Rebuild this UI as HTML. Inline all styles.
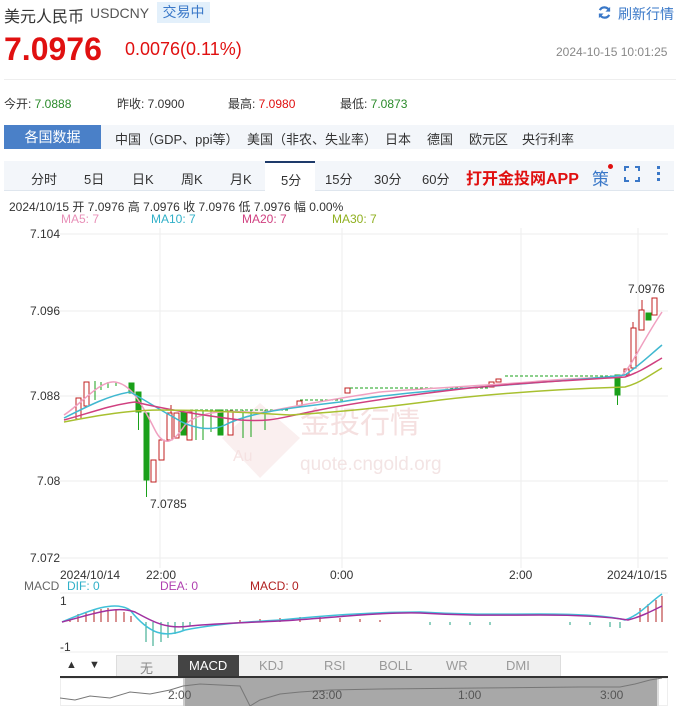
<!DOCTYPE html>
<html><head><meta charset="utf-8"><style>
*{margin:0;padding:0;box-sizing:border-box}
body{width:682px;height:708px;background:#fff;font-family:"Liberation Sans","Noto Sans CJK SC",sans-serif;position:relative;overflow:hidden;color:#333}
.a{position:absolute;white-space:nowrap}
</style></head><body>
<div class="a" style="left:4px;top:3px;font-size:16px;color:#333">美元人民币</div>
<div class="a" style="left:90px;top:5px;font-size:14px;color:#555">USDCNY</div>
<div class="a" style="left:157px;top:2px;width:53px;height:21px;background:#e3f0fb;color:#3a78c8;font-size:14px;text-align:center;line-height:21px">交易中</div>
<svg class="a" style="left:597px;top:5px" width="15" height="15" viewBox="0 0 16 16"><path d="M13 6A5.5 5.5 0 0 0 3 5.5M3 10a5.5 5.5 0 0 0 10 .5" fill="none" stroke="#3a78c8" stroke-width="2.4"/><path d="M14 2v5h-5z M2 14v-5h5z" fill="#3a78c8"/></svg>
<div class="a" style="left:618px;top:4px;font-size:14px;color:#3a78c8">刷新行情</div>
<div class="a" style="left:4px;top:31px;font-size:32px;font-weight:bold;color:#e01010">7.0976</div>
<div class="a" style="left:125px;top:39px;font-size:18px;color:#e01010">0.0076(0.11%)</div>
<div class="a" style="left:556px;top:45px;font-size:12px;color:#888">2024-10-15 10:01:25</div>
<div class="a" style="left:4px;top:79px;width:672px;height:1px;background:#eee"></div>
<div class="a" style="left:4px;top:95px;font-size:12px">今开: <span style="color:#2a8a2a">7.0888</span></div>
<div class="a" style="left:117px;top:95px;font-size:12px">昨收: 7.0900</div>
<div class="a" style="left:228px;top:95px;font-size:12px">最高: <span style="color:#e01010">7.0980</span></div>
<div class="a" style="left:340px;top:95px;font-size:12px">最低: <span style="color:#2a8a2a">7.0873</span></div>
<div class="a" style="left:4px;top:125px;width:670px;height:24px;background:#f3f6fa"></div>
<div class="a" style="left:4px;top:125px;width:97px;height:24px;background:#4a80c8;color:#fff;font-size:14px;text-align:center;line-height:24px">各国数据</div>
<div class="a" style="left:115px;top:129px;font-size:13px">中国（GDP、ppi等）</div>
<div class="a" style="left:247px;top:129px;font-size:13px">美国（非农、失业率）</div>
<div class="a" style="left:385px;top:129px;font-size:13px">日本</div>
<div class="a" style="left:427px;top:129px;font-size:13px">德国</div>
<div class="a" style="left:469px;top:129px;font-size:13px">欧元区</div>
<div class="a" style="left:522px;top:129px;font-size:13px">央行利率</div>
<div class="a" style="left:4px;top:161px;width:670px;height:30px;background:#f3f6fa;border-bottom:1px solid #dfe6ee"></div>
<div class="a" style="left:265px;top:161px;width:50px;height:31px;background:#fff;border-top:2px solid #1e3a6a"></div>
<div class="a" style="top:169px;font-size:13px;left:31px">分时</div>
<div class="a" style="top:169px;font-size:13px;left:84px">5日</div>
<div class="a" style="top:169px;font-size:13px;left:132px">日K</div>
<div class="a" style="top:169px;font-size:13px;left:181px">周K</div>
<div class="a" style="top:169px;font-size:13px;left:230px">月K</div>
<div class="a" style="top:170px;font-size:13px;left:281px">5分</div>
<div class="a" style="top:169px;font-size:13px;left:325px">15分</div>
<div class="a" style="top:169px;font-size:13px;left:374px">30分</div>
<div class="a" style="top:169px;font-size:13px;left:422px">60分</div>
<div class="a" style="top:165px;font-size:16px;left:466px;color:#e01010;font-weight:bold">打开金投网APP</div>
<div class="a" style="top:165px;font-size:17px;left:592px;color:#3a78c8">策</div>
<div class="a" style="top:164px;left:608px;width:5px;height:5px;border-radius:50%;background:#e01010"></div>
<svg class="a" style="left:624px;top:166px" width="16" height="16"><path d="M1 5V1h4M11 1h4v4M15 11v4h-4M5 15H1v-4" fill="none" stroke="#3a78c8" stroke-width="2"/></svg>
<div class="a" style="left:657px;top:166px;width:3px;height:3px;background:#3a78c8;box-shadow:0 6px #3a78c8,0 12px #3a78c8"></div>
<div class="a" style="left:9px;top:198px;font-size:12px">2024/10/15 开 7.0976 高 7.0976 收 7.0976 低 7.0976 幅 0.00%</div>
<div class="a" style="left:61px;top:212px;font-size:12px;color:#e890b8">MA5: 7</div>
<div class="a" style="left:151px;top:212px;font-size:12px;color:#30b0c8">MA10: 7</div>
<div class="a" style="left:242px;top:212px;font-size:12px;color:#d04080">MA20: 7</div>
<div class="a" style="left:332px;top:212px;font-size:12px;color:#90b020">MA30: 7</div>
<div class="a" style="left:30px;top:227px;font-size:12px">7.104</div>
<div class="a" style="left:30px;top:304px;font-size:12px">7.096</div>
<div class="a" style="left:30px;top:389px;font-size:12px">7.088</div>
<div class="a" style="left:37px;top:474px;font-size:12px">7.08</div>
<div class="a" style="left:30px;top:551px;font-size:12px">7.072</div>
<svg class="a" style="left:0;top:228px" width="682" height="480">
<g stroke="#eee" stroke-width="1">
<line x1="60" y1="6" x2="668" y2="6"/><line x1="60" y1="83" x2="668" y2="83"/><line x1="60" y1="168" x2="668" y2="168"/><line x1="60" y1="253" x2="668" y2="253"/><line x1="60" y1="330" x2="668" y2="330"/>
<line x1="160" y1="0" x2="160" y2="340"/><line x1="342" y1="0" x2="342" y2="340"/><line x1="521" y1="0" x2="521" y2="340"/><line x1="638" y1="0" x2="638" y2="340"/>
</g>
<g opacity="0.08"><path d="M222 210L260 175L300 210L260 250Z" fill="#c03030"/></g>
<text x="300" y="205" font-size="30" fill="#f5e0e0" font-family="Noto Sans CJK SC">金投行情</text>
<text x="300" y="242" font-size="19" fill="#f3e4e4">quote.cngold.org</text>
<text x="233" y="233" font-size="16" fill="#f5e2e2">Au</text>
</svg>
<svg class="a" style="left:0;top:0" width="682" height="708">
<g fill="#fff" stroke="#c02020" stroke-width="1">
<rect x="76" y="398" width="5" height="21"/><rect x="84" y="382" width="5" height="24"/>
<rect x="151" y="460" width="5" height="22"/><rect x="159" y="440" width="5" height="20"/><rect x="167" y="413" width="5" height="27"/><rect x="174" y="413" width="5" height="25"/><rect x="187" y="412" width="5" height="28"/><rect x="228" y="411" width="5" height="24"/>
<rect x="297" y="401" width="5" height="5"/><rect x="345" y="388" width="5" height="5"/><rect x="489" y="382" width="5" height="5"/><rect x="496" y="379" width="5" height="3"/>
<rect x="624" y="369" width="5" height="6"/><rect x="631" y="328" width="5" height="40"/><rect x="639" y="310" width="5" height="20"/><rect x="652" y="298" width="5" height="17"/>
</g>
<g stroke="#c02020"><line x1="642" y1="300" x2="642" y2="310"/><line x1="633" y1="322" x2="633" y2="328"/><line x1="171" y1="405" x2="171" y2="413"/></g>
<g fill="#1aa01a" stroke="#1aa01a">
<rect x="129" y="383" width="5" height="10"/><rect x="136" y="392" width="5" height="20"/><line x1="138.5" y1="412" x2="138.5" y2="430"/>
<rect x="144" y="413" width="5" height="67"/><line x1="146.5" y1="480" x2="146.5" y2="497"/>
<rect x="181" y="412" width="5" height="23"/><rect x="218" y="410" width="5" height="25"/>
<rect x="615" y="375" width="5" height="20"/><line x1="617.5" y1="395" x2="617.5" y2="405"/><rect x="646" y="313" width="5" height="7"/>
<line x1="95" y1="381" x2="95" y2="400"/><line x1="101" y1="382" x2="101" y2="390"/><line x1="108" y1="382" x2="108" y2="388"/><line x1="116" y1="382" x2="116" y2="386"/>
<line x1="196" y1="410" x2="196" y2="440"/><line x1="203" y1="410" x2="203" y2="440"/><line x1="211" y1="410" x2="211" y2="432"/><line x1="243" y1="410" x2="243" y2="438"/><line x1="251" y1="410" x2="251" y2="437"/><line x1="265" y1="410" x2="265" y2="430"/>
</g>
<g stroke="#1aa01a" stroke-dasharray="3,2" fill="none"><path d="M190 410H290M300 400H345M350 388H490M505 376H620"/></g>
<g fill="none" stroke-width="1.5">
<path d="M64 415C80 405 100 380 115 382C130 384 140 400 155 430C165 450 175 440 185 425C200 410 230 410 260 413C300 405 340 398 380 392C430 388 480 386 530 382C570 378 600 378 620 377C630 370 640 345 662 312" stroke="#f0a0c0"/>
<path d="M64 418C90 405 110 395 130 392C145 400 160 410 175 418C190 428 210 432 225 425C250 412 290 408 340 402C400 392 470 388 520 384C570 380 600 378 625 375C640 365 650 355 662 345" stroke="#40b8d0"/>
<path d="M64 420C90 413 110 405 135 402C160 408 200 415 240 420C270 422 280 418 300 414C340 405 400 396 470 388C530 382 580 380 625 377C640 372 650 365 662 358" stroke="#d04080"/>
<path d="M64 422C100 415 130 410 160 410C200 410 240 412 290 415C340 412 380 408 440 400C500 393 560 389 625 387C640 383 650 375 662 368" stroke="#a8c030"/>
</g>
<text x="150" y="508" font-size="12" fill="#333">7.0785</text>
<text x="628" y="293" font-size="12" fill="#333">7.0976</text>
</svg>
<div class="a" style="left:60px;top:568px;font-size:12px">2024/10/14</div>
<div class="a" style="left:146px;top:568px;font-size:12px">22:00</div>
<div class="a" style="left:330px;top:568px;font-size:12px">0:00</div>
<div class="a" style="left:509px;top:568px;font-size:12px">2:00</div>
<div class="a" style="left:607px;top:568px;font-size:12px">2024/10/15</div>
<div class="a" style="left:24px;top:579px;font-size:12px;color:#666">MACD</div>
<div class="a" style="left:67px;top:579px;font-size:12px;color:#30b0c8">DIF: 0</div>
<div class="a" style="left:160px;top:579px;font-size:12px;color:#b040b0">DEA: 0</div>
<div class="a" style="left:250px;top:579px;font-size:12px;color:#b02020">MACD: 0</div>
<div class="a" style="left:60px;top:594px;font-size:12px">1</div>
<div class="a" style="left:60px;top:640px;font-size:12px">-1</div>
<svg class="a" style="left:0;top:590px" width="682" height="66">
<line x1="60" y1="3" x2="668" y2="3" stroke="#eee"/><line x1="60" y1="62" x2="668" y2="62" stroke="#eee"/>
<g stroke="#b02020"><path d="M70 32v-4M78 32v-8M86 32v-10M94 32v-12M101 32v-13M108 32v-14M116 32v-13M124 32v-10M131 32v-6M240 32v-2M260 32v-3M280 32v-4M300 32v-5M320 32v-5M340 32v-4M360 32v-3M380 32v-2M640 32v-14M648 32v-18M656 32v-22M662 32v-26"/></g>
<g stroke="#20a080"><path d="M146 32v20M153 32v24M161 32v20M168 32v16M175 32v12M183 32v8M190 32v4M430 32v3M450 32v3M470 32v3M490 32v3M570 32v3M590 32v3M610 32v5M620 32v6"/></g>
<path d="M62 32C90 20 115 10 130 20C150 45 165 48 185 40C210 35 240 32 280 30C330 25 380 22 420 22C470 25 500 24 540 24C580 24 610 26 625 30C640 25 650 12 662 4" fill="none" stroke="#40c0d8" stroke-width="1.5"/>
<path d="M62 32C90 25 115 15 135 22C150 30 165 40 190 36C220 33 240 33 280 31C330 28 380 22 420 23C470 26 500 25 540 25C580 25 610 27 628 30C640 27 650 22 662 16" fill="none" stroke="#a030a0" stroke-width="1.5"/>
</svg>
<div class="a" style="left:60px;top:655px;width:608px;height:22px;background:#fff"></div>
<div class="a" style="left:66px;top:659px;font-size:11px">▲</div>
<div class="a" style="left:89px;top:659px;font-size:11px">▼</div>
<div class="a" style="left:116px;top:655px;width:445px;height:22px;background:#f0f0f0;border:1px solid #ddd"></div>
<div class="a" style="left:178px;top:655px;width:61px;height:22px;background:#444"></div>
<div class="a" style="top:658px;font-size:13px;left:140px;color:#888">无</div>
<div class="a" style="top:658px;font-size:13px;left:189px;color:#fff">MACD</div>
<div class="a" style="top:658px;font-size:13px;left:259px;color:#999">KDJ</div>
<div class="a" style="top:658px;font-size:13px;left:324px;color:#999">RSI</div>
<div class="a" style="top:658px;font-size:13px;left:379px;color:#999">BOLL</div>
<div class="a" style="top:658px;font-size:13px;left:446px;color:#999">WR</div>
<div class="a" style="top:658px;font-size:13px;left:506px;color:#999">DMI</div>
<div class="a" style="left:60px;top:676px;width:608px;height:2px;background:#333"></div>
<div class="a" style="left:60px;top:678px;width:608px;height:28px;border:1px solid #eee"></div>
<div class="a" style="left:183px;top:678px;width:476px;height:28px;background:#a8a8a8;border-left:2px solid #ccc;border-right:2px solid #ddd"></div>
<svg class="a" style="left:60px;top:678px" width="606" height="28"><path d="M0 20L15 22L30 18L50 20L70 14L90 16L110 12L123 8L140 6L180 8L190 28L200 22L220 16L240 14L270 12L320 11L420 10L520 9L560 9L575 6L590 2L602 0" fill="none" stroke="#777"/></svg>
<div class="a" style="left:168px;top:688px;font-size:12px;color:#555">2:00</div>
<div class="a" style="left:312px;top:688px;font-size:12px;color:#555">23:00</div>
<div class="a" style="left:458px;top:688px;font-size:12px;color:#555">1:00</div>
<div class="a" style="left:600px;top:688px;font-size:12px;color:#555">3:00</div>
</body></html>
